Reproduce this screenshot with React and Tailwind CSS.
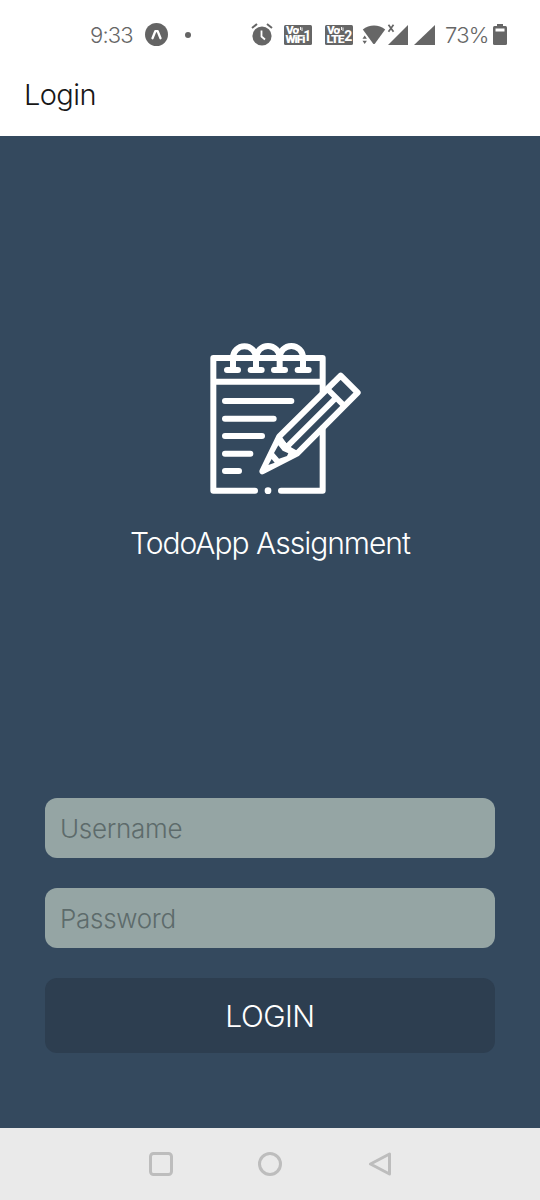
import React from "react";

function VolteBadge({ lower, digit, size }) {
  return (
    <svg width="28" height="20" viewBox="0 0 28 20" fontFamily="Roboto, sans-serif" fontWeight="900" fill="#fff">
      <rect width="28" height="20" rx="1.5" fill="#666" />
      <text x="2" y="9" fontSize="10" textLength="12" lengthAdjust="spacingAndGlyphs">Vo</text>
      <path d="M14.500 6v-2.500M16.500 5v-3M18 6v-3.500" stroke="#fff" strokeWidth="0.9" />
      <text x="1.5" y="18" fontSize="10" textLength={size} lengthAdjust="spacingAndGlyphs">{lower}</text>
      <text x="19.3" y="15.500" fontSize="14" fontWeight="700">{digit}</text>
    </svg>
  );
}

function StatusBar() {
  return (
    <div className="flex h-[69px] items-center pl-[90px] text-[22px] font-light tracking-[-0.8px] text-[#666]">
      <span className="w-[55px] pt-px">9:33</span>
      <svg width="23" height="23" viewBox="0 0 23 23">
        <circle cx="11.5" cy="11.5" r="11.5" fill="#646464" />
        <path d="M7.500 15.200 10.300 8.200h2.400l2.800 7" fill="none" stroke="#fff" strokeWidth="2.3" strokeLinecap="round" strokeLinejoin="round" />
      </svg>
      <span className="ml-[17px] h-[6px] w-[6px] rounded-full bg-[#646464]" />
      <svg className="ml-[60px]" width="22" height="23" viewBox="0 0 22 23" fill="none">
        <circle cx="11" cy="13" r="9.6" fill="#666" />
        <path d="m1 5 5-4M21 5l-5-4" stroke="#666" strokeWidth="2" />
        <path d="M10.5 7.5v6l3.5 3" stroke="#fff" strokeWidth="1.8" />
      </svg>
      <span className="ml-[11px]"><VolteBadge lower="WiFi" digit="1" size="19" /></span>
      <span className="ml-[13px]"><VolteBadge lower="LTE" digit="2" size="17" /></span>
      <svg className="ml-[9px]" width="24" height="22" viewBox="0 0 24 22">
        <path d="M0.800 5.500C7 0 17 0 23.200 5.500L13 19.500q-1 1.200-2 0Z" fill="#666" />
        <path d="m0.500 14.800 2.200-3.300 2.200 3.300ZM0.500 16.800l2.200 3.300 2.200-3.300Z" fill="#666" />
      </svg>
      <svg width="24" height="22" viewBox="0 0 24 22">
        <path d="M22 1v20H2Z" fill="#666" />
        <path d="m2.500 0.800 5 7M7.500 0.800l-5 7" stroke="#666" strokeWidth="1.7" />
      </svg>
      <svg className="ml-[4px]" width="21" height="22" viewBox="0 0 21 22">
        <path d="M21 1v20H0Z" fill="#666" />
      </svg>
      <span className="ml-[10px] w-[48px] pt-px whitespace-nowrap">73%</span>
      <svg width="14" height="21" viewBox="0 0 14 21">
        <rect x="4" width="6" height="4" fill="#666" />
        <rect y="2" width="14" height="19" rx="1.5" fill="#666" />
        <rect x="2.5" y="4.5" width="9" height="3" fill="#fff" />
      </svg>
    </div>
  );
}

function NotepadIcon() {
  return (
    <svg width="170" height="170" viewBox="0 0 510 510" fill="none" stroke="#fff" strokeWidth="18" strokeLinecap="round" strokeLinejoin="round">
      <path d="M165 467H40V69H368V172M368 280V467H243M40 140H368" />
      <path d="M99 100V68a34 34 0 0 1 69 0v36M169 68a34 34 0 0 1 70 0v36M239 68a34 34 0 0 1 70 0v36" />
      <path d="M81 105h33M152 105h33M222 105h33M293 105h33" />
      <path d="M75 198H274M75 251H221M75 303H186M75 356H151M75 408H117" />
      <circle cx="204" cy="467" r="10" fill="#fff" stroke="none" />
      <path d="M187 409 238 304 422 122 473 173 291 356Z" />
      <path d="m385 165 46 46M408 188 258 338M240 312l18 26 28 16" strokeWidth="17" />
      <path d="m187 409 51-105 54 52Z" fill="#fff" stroke="none" />
      <path d="m235 331 13 16 17 8-4 8-24 8-15-17Z" fill="#34495e" stroke="none" />
      <path d="m215 372 9 11-19 7Z" fill="#34495e" stroke="none" />
    </svg>
  );
}

function Field({ label, type }) {
  return (
    <input
      type={type}
      placeholder={label}
      aria-label={label}
      className="h-[60px] w-full rounded-[12px] bg-[#95a5a4] px-[15px] text-[26px] font-light tracking-[-0.3px] text-[#2c3e50] outline-none placeholder:text-[#5d6b6b]"
    />
  );
}

export default function App() {
  return (
    <div className="flex h-[1200px] w-[540px] flex-col bg-white font-['Inter',sans-serif]">
      <header className="h-[136px] shrink-0">
        <StatusBar />
        <h1 className="pl-[24px] pt-[4px] text-[29px] leading-[44px] font-light tracking-[-0.6px] text-[#171717]">Login</h1>
      </header>
      <main className="flex h-[992px] flex-col bg-[#34495e] px-[45px]">
        <div className="flex flex-col items-center pt-[199px]">
          <div className="pl-[30px]"><NotepadIcon /></div>
          <p className="mt-[16px] whitespace-nowrap text-[30px] leading-[44px] font-light tracking-[-1.02px] text-white">TodoApp Assignment</p>
        </div>
        <form className="mt-auto mb-[75px] flex flex-col gap-[30px]">
          <Field label="Username" type="text" />
          <Field label="Password" type="password" />
          <button type="button" className="h-[75px] rounded-[12px] bg-[#2d3e50] pt-[2px] text-[30px] font-light tracking-[-0.5px] text-white">LOGIN</button>
        </form>
      </main>
      <nav className="flex h-[72px] items-center bg-[#eaeaea] pl-[149px]">
        <svg width="244" height="24" viewBox="0 0 244 24" fill="none" stroke="#bdbdbd" strokeWidth="3" strokeLinejoin="round">
          <rect x="1.500" y="1.500" width="21" height="21" rx="3" />
          <circle cx="121" cy="12" r="10.500" />
          <path d="M240.500 2v20L221.500 12Z" />
        </svg>
      </nav>
    </div>
  );
}
